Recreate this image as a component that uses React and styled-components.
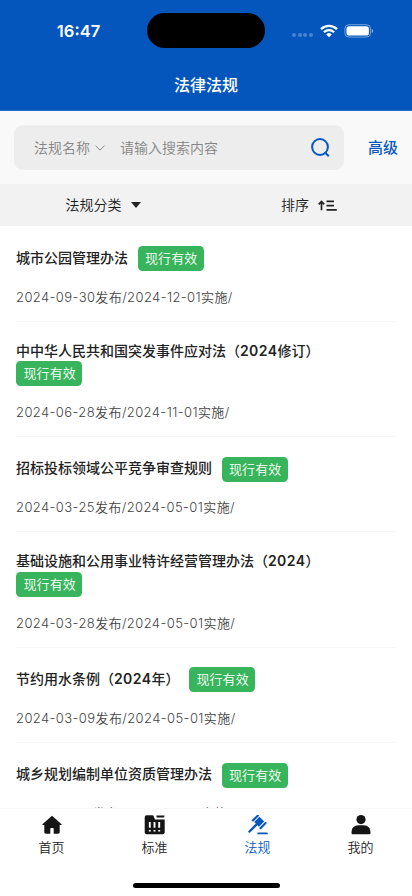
import styled, { createGlobalStyle } from "styled-components";

const regulations = [
  { name: "城市公园管理办法", published: "2024-09-30", effective: "2024-12-01" },
  {
    name: "中中华人民共和国突发事件应对法（2024修订）",
    published: "2024-06-28",
    effective: "2024-11-01",
  },
  {
    name: "招标投标领域公平竞争审查规则",
    published: "2024-03-25",
    effective: "2024-05-01",
  },
  {
    name: "基础设施和公用事业特许经营管理办法（2024）",
    published: "2024-03-28",
    effective: "2024-05-01",
  },
  {
    name: "节约用水条例（2024年）",
    published: "2024-03-09",
    effective: "2024-05-01",
  },
  {
    name: "城乡规划编制单位资质管理办法",
    published: "2024-01-24",
    effective: "2024-03-01",
  },
];

const WifiIcon = () => (
  <svg width="18" height="14" viewBox="0 0 18 14" fill="none" stroke="#fff">
    <path d="M1 5.2a11.4 11.4 0 0 1 16 0" strokeWidth="2.4" />
    <path d="M3.9 8.2a7.3 7.3 0 0 1 10.2 0" strokeWidth="2.3" />
    <path d="M9 13.2 6.2 10.4a4 4 0 0 1 5.6 0z" fill="#fff" stroke="none" />
  </svg>
);

const BatteryIcon = () => (
  <svg width="30" height="14" viewBox="0 0 30 14" fill="none">
    <rect x="0.9" y="0.7" width="25.6" height="12.4" rx="4" stroke="#fff" strokeOpacity="0.45" />
    <rect x="2.5" y="2.3" width="22.4" height="9.2" rx="2.6" fill="#fff" />
    <path d="M27.8 5v4c.9-.3 1.4-1 1.4-2s-.5-1.7-1.4-2z" fill="#fff" fillOpacity="0.5" />
  </svg>
);

const ChevronIcon = () => (
  <svg width="10" height="6" viewBox="0 0 10 6" fill="none" stroke="#888">
    <path d="m.5.6 4.5 4.5L9.5.6" />
  </svg>
);

const SearchIcon = () => (
  <svg width="20" height="20" viewBox="0 0 20 20" fill="none" stroke="#0757bf" strokeWidth="2">
    <circle cx="9" cy="9" r="7.9" />
    <path d="m13.8 14.2 4 4" />
  </svg>
);

const SortIcon = () => (
  <svg width="19" height="11" viewBox="0 0 19 11" fill="none" stroke="#222" strokeWidth="1.7">
    <path d="M3.5 10.3V1.5M.7 4.3l2.8-2.8 2.8 2.8M8.5 1.3H16M8.5 5.6H16M8.5 9.9h10.3" />
  </svg>
);

const HomeIcon = () => (
  <svg width="20" height="20" viewBox="0 0 20 20" fill="#151515">
    <path d="M10 .8.4 9.3c-.2.3-.1.6.3.6h1.6v7.2c0 1 .6 1.7 1.6 1.7h4.4v-5.3c0-.4.2-.6.6-.6h2.2c.4 0 .6.2.6.6v5.3h4.4c1 0 1.6-.7 1.6-1.7V9.9h1.6c.4 0 .5-.3.3-.6z" />
  </svg>
);

const StandardIcon = () => (
  <svg width="22" height="20" viewBox="0 0 22 20">
    <path
      d="M2.7.3h5.7c.7 0 1 .3 1.3.9L11 4.4h9.7v12.9a2 2 0 0 1-2 2H2.7a2 2 0 0 1-2-2V2.3a2 2 0 0 1 2-2z"
      fill="#151515"
    />
    <path d="M12.4.6h8.2L20 2.6h-7.4z" fill="#151515" />
    <path d="M5.8 7v5.7M10.5 7v5.7M15.2 7v5.7" stroke="#fff" strokeWidth="1.9" />
    <path d="M5.8 14.9v1.7M10.5 14.9v1.7M15.2 14.9v1.7" stroke="#fff" strokeWidth="1.9" />
  </svg>
);

const GavelIcon = () => (
  <svg width="20" height="20" viewBox="0 0 20 20" fill="#0757bf">
    <g transform="translate(11.2 6.8) rotate(45)">
      <rect x="-3.3" y="-3.7" width="6.6" height="7.4" />
      <rect x="-6.4" y="-4.5" width="2.1" height="9" rx=".5" />
      <rect x="4.3" y="-4.5" width="2.1" height="9" rx=".5" />
      <rect x="-1.15" y="3" width="2.3" height="12" rx="1" />
    </g>
    <path d="M9.8 17.6h9.5c.4.5.6 1 .6 1.7H9.2c0-.7.2-1.2.6-1.7z" />
  </svg>
);

const UserIcon = () => (
  <svg width="20" height="20" viewBox="0 0 20 20" fill="#151515">
    <circle cx="10" cy="4.6" r="4.6" />
    <path d="M.5 17.8c0-4.8 2.5-7.6 7-7.6h5c4.5 0 7 2.8 7 7.6 0 1-.5 1.5-1.5 1.5H2c-1 0-1.5-.5-1.5-1.5z" />
  </svg>
);

const tabs = [
  { label: "首页", icon: <HomeIcon /> },
  { label: "标准", icon: <StandardIcon /> },
  { label: "法规", icon: <GavelIcon />, active: true },
  { label: "我的", icon: <UserIcon /> },
];

const App = () => {
  return (
    <>
      <GlobalStyle />
      <Screen lang="zh-CN">
        <Header>
          <StatusBar>
            <Clock>16:47</Clock>
            <Island />
            <StatusIcons>
              <Signal>
                <i />
                <i />
                <i />
                <i />
              </Signal>
              <WifiIcon />
              <BatteryIcon />
            </StatusIcons>
          </StatusBar>
          <PageTitle>法律法规</PageTitle>
        </Header>

        <SearchRow>
          <SearchBox>
            <FieldSelect>
              法规名称
              <ChevronIcon />
            </FieldSelect>
            <Placeholder>请输入搜索内容</Placeholder>
            <SearchIcon />
          </SearchBox>
          <Advanced>高级</Advanced>
        </SearchRow>

        <FilterBar>
          <Filter>
            法规分类
            <Caret />
          </Filter>
          <Filter>
            排序
            <SortIcon />
          </Filter>
        </FilterBar>

        <List>
          {regulations.map((curr) => (
            <Item key={curr.name}>
              <Heading>
                <Name>
                  {curr.name
                    .split(/(\d+)/)
                    .map((part, idx) => (idx % 2 ? <b key={idx}>{part}</b> : part))}
                </Name>
                <Badge>现行有效</Badge>
              </Heading>
              <Dates>
                {curr.published}发布/{curr.effective}实施/
              </Dates>
            </Item>
          ))}
        </List>

        <TabBar>
          {tabs.map((tab) => (
            <Tab key={tab.label} $active={tab.active}>
              {tab.icon}
              <span>{tab.label}</span>
            </Tab>
          ))}
        </TabBar>
        <HomeIndicator />
      </Screen>
    </>
  );
};

const GlobalStyle = createGlobalStyle`
  * {
    box-sizing: border-box;
  }
  body {
    margin: 0;
    font-family: Inter, "Noto Sans CJK SC", sans-serif;
    font-weight: 350;
    -webkit-font-smoothing: antialiased;
  }
  svg {
    display: block;
    flex-shrink: 0;
  }
`;

const Screen = styled.div`
  display: flex;
  flex-direction: column;
  width: 412px;
  height: 896px;
  overflow: hidden;
  background-color: #fff;
`;

const Header = styled.header`
  flex: none;
  height: 111px;
  background-color: #0456bc;
  border-bottom: 1px solid #2a6dc5;
  color: #fff;
`;

const StatusBar = styled.div`
  display: grid;
  grid-template-columns: 147px 118px 1fr;
  align-items: center;
  height: 61px;
`;

const Clock = styled.div`
  padding-left: 10px;
  text-align: center;
  font-size: 16.5px;
  font-weight: 600;
`;

const Island = styled.div`
  height: 35px;
  border-radius: 18px;
  background-color: #000;
`;

const StatusIcons = styled.div`
  display: flex;
  align-items: center;
  padding-left: 27px;
  svg:last-child {
    margin-left: 6px;
  }
`;

const Signal = styled.div`
  display: flex;
  gap: 1.7px;
  margin: 9px 7px 0 0;
  i {
    width: 4px;
    height: 4px;
    border-radius: 50%;
    background-color: rgba(255, 255, 255, 0.27);
  }
`;

const PageTitle = styled.h1`
  margin: 12px 0 0;
  text-align: center;
  font-size: 16px;
  font-weight: 500;
  line-height: 24px;
`;

const SearchRow = styled.div`
  display: flex;
  flex: none;
  align-items: center;
  height: 73px;
  padding: 0 14px;
  background-color: #f9f9f9;
`;

const SearchBox = styled.div`
  display: flex;
  align-items: center;
  width: 330px;
  height: 45px;
  padding: 0 13px 0 20px;
  border-radius: 9px;
  background-color: #ededed;
  color: #858585;
  font-size: 14px;
  line-height: 20px;
`;

const FieldSelect = styled.div`
  display: flex;
  align-items: center;
  gap: 5px;
`;

const Placeholder = styled.div`
  flex: 1;
  margin-left: 15px;
`;

const Advanced = styled.div`
  margin-left: auto;
  color: #0757bf;
  font-size: 15px;
  font-weight: 500;
  line-height: 22px;
`;

const FilterBar = styled.div`
  display: grid;
  grid-template-columns: 1fr 1fr;
  flex: none;
  height: 42px;
  background-color: #f2f2f2;
`;

const Filter = styled.div`
  display: flex;
  align-items: center;
  justify-content: center;
  gap: 9px;
  color: #1c1c1c;
  font-size: 14px;
  line-height: 20px;
`;

const Caret = styled.span`
  border: 5px solid transparent;
  border-top: 6px solid #222;
  border-bottom: 0;
`;

const List = styled.main`
  flex: 1;
  min-height: 0;
  padding: 0.6px 16px 0;
  overflow: hidden;
`;

const Item = styled.article`
  padding: 19.6px 0 13.7px;
  border-bottom: 1px solid #f7f7f7;
`;

const Heading = styled.div`
  display: flex;
  flex-wrap: wrap;
  align-items: center;
  padding-right: 4px;
`;

const Name = styled.h2`
  margin: -0.8px 9.5px 0.8px 0;
  color: #222;
  font-size: 14px;
  font-weight: 500;
  line-height: 20px;
  b {
    font-weight: 600;
    letter-spacing: 0.4px;
  }
`;

const Badge = styled.span`
  height: 25px;
  padding: 0 6.5px 0 7.5px;
  border-radius: 4.5px;
  background-color: #37b45c;
  color: #fff;
  font-size: 13px;
  line-height: 24px;
  letter-spacing: 0.1px;
`;

const Dates = styled.p`
  margin: 16.5px 0 0;
  color: #444;
  font-size: 13px;
  line-height: 19.5px;
  letter-spacing: 0.4px;
`;

const TabBar = styled.nav`
  display: grid;
  grid-template-columns: repeat(4, 103px);
  flex: none;
  height: 75px;
  border-top: 1px solid #f8f8f8;
`;

const Tab = styled.div`
  display: flex;
  flex-direction: column;
  align-items: center;
  gap: 2px;
  padding-top: 6px;
  color: ${({ $active }) => ($active ? "#0757bf" : "#222")};
  font-size: 13px;
  line-height: 20px;
`;

const HomeIndicator = styled.div`
  flex: none;
  align-self: center;
  width: 147px;
  height: 5px;
  margin-bottom: 8px;
  border-radius: 3px;
  background-color: #000;
`;

export default App;
